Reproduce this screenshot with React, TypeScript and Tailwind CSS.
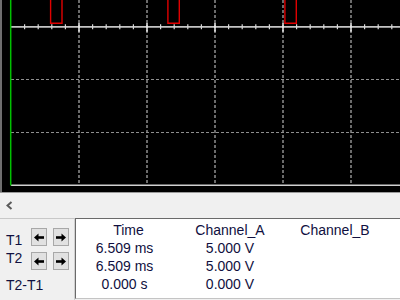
import React from "react";

const font = { fontFamily: '"Liberation Sans", Arial, sans-serif' };

function Scope() {
  const vx = [79, 147, 215, 283, 351];
  const hy = [79.5, 132.5];
  const ticks: number[] = [];
  for (let k = 1; k < 30; k++) {
    const x = 11 + 13.6 * k;
    if (x < 400) ticks.push(k);
  }
  const pulses = [50, 167.3, 284.3];
  return (
    <svg width={400} height={193} viewBox="0 0 400 193" className="block">
      <rect x={0} y={0} width={400} height={193} fill="#000" />
      <rect x={0} y={0} width={2} height={193} fill="#6e6e6e" />
      {vx.map((x) => (
        <line key={x} x1={x} y1={0} x2={x} y2={185} stroke="#8f8f8f" strokeWidth={1.5} strokeDasharray="3 2" />
      ))}
      {hy.map((y) => (
        <line key={y} x1={11} y1={y} x2={400} y2={y} stroke="#8f8f8f" strokeWidth={1.2} strokeDasharray="3 2" />
      ))}
      <line x1={11} y1={26.8} x2={400} y2={26.8} stroke="#c4c4c4" strokeWidth={1.7} />
      {ticks.map((k) => {
        const x = 11 + 13.6 * k;
        const major = k % 5 === 0;
        return (
          <line
            key={k}
            x1={x}
            y1={major ? 23 : 24.3}
            x2={x}
            y2={major ? 31.7 : 29.3}
            stroke={major ? "#f0f0f0" : "#d8d8d8"}
            strokeWidth={major ? 1.5 : 1.2}
          />
        );
      })}
      <line x1={11} y1={185.3} x2={400} y2={185.3} stroke="#d0d0d0" strokeWidth={1.4} />
      <line x1={10.7} y1={0} x2={10.7} y2={185.5} stroke="#00c000" strokeWidth={1.5} />
      {pulses.map((x) => (
        <path
          key={x}
          d={`M ${x + 0.6} -2 L ${x + 0.6} 23.2 L ${x + 12} 23.2 L ${x + 12} -2`}
          fill="none"
          stroke="#e00000"
          strokeWidth={1.4}
        />
      ))}
      <line x1={0} y1={192.5} x2={400} y2={192.5} stroke="#9a9a9a" strokeWidth={1} />
    </svg>
  );
}

function ArrowBtn({ dir }: { dir: "l" | "r" }) {
  return (
    <div className="w-[16px] h-[18px] bg-[#e1e1e1] border border-[#a8a8a8] flex items-center justify-center">
      <svg width={10} height={9} viewBox="0 0 10 9">
        {dir === "l" ? (
          <g fill="#000">
            <polygon points="0,4.5 4.5,0.5 4.5,8.5" />
            <rect x={4} y={3.2} width={6} height={2.6} />
          </g>
        ) : (
          <g fill="#000">
            <polygon points="10,4.5 5.5,0.5 5.5,8.5" />
            <rect x={0} y={3.2} width={6} height={2.6} />
          </g>
        )}
      </svg>
    </div>
  );
}

export default function App() {
  const txt = "text-[14px] leading-[18px] text-[#101040]";
  return (
    <div className="w-[400px] h-[300px] bg-[#f0f0f0] overflow-hidden flex flex-col" style={font}>
      <Scope />
      <div className="h-[25px] flex items-center pl-[6px]">
        <svg width={8} height={9} viewBox="0 0 8 9">
          <polyline points="5.5,1 1.5,4.5 5.5,8" fill="none" stroke="#5a5a5a" strokeWidth={2} />
        </svg>
      </div>
      <div className="flex flex-1">
        <div className="w-[75px] flex border-t border-[#c8c8c8] border-r border-r-[#d0d0d0]">
          <div className={`w-[31px] pl-[6px] flex flex-col pt-[12px] ${txt}`}>
            <div>T1</div>
            <div>T2</div>
            <div className="mt-[9px] whitespace-nowrap">T2-T1</div>
          </div>
          <div className="flex flex-col gap-[6px] pt-[9px]">
            <div className="flex gap-[6px]">
              <ArrowBtn dir="l" />
              <ArrowBtn dir="r" />
            </div>
            <div className="flex gap-[6px]">
              <ArrowBtn dir="l" />
              <ArrowBtn dir="r" />
            </div>
          </div>
        </div>
        <div className="flex-1 h-[81px] bg-white border-l border-t border-[#6a6a6a] border-b border-b-[#c4c4c4] pt-[2px]">
          <div className={`grid grid-cols-[104px_100px_110px] ${txt}`}>
            <div className="text-center pl-[1px]">Time</div>
            <div className="text-center">Channel_A</div>
            <div className="text-center">Channel_B</div>
            <div className="text-center pr-[7px]">6.509 ms</div>
            <div className="text-center">5.000 V</div>
            <div></div>
            <div className="text-center pr-[7px]">6.509 ms</div>
            <div className="text-center">5.000 V</div>
            <div></div>
            <div className="text-center pr-[7px]">0.000 s</div>
            <div className="text-center">0.000 V</div>
            <div></div>
          </div>
        </div>
      </div>
    </div>
  );
}
